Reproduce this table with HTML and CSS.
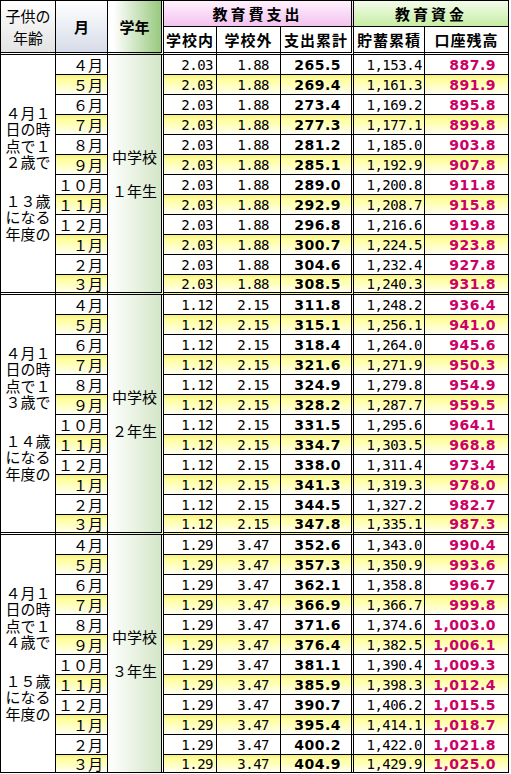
FILE: index.html
```html
<!DOCTYPE html>
<html lang="ja">
<head>
<meta charset="utf-8">
<title>教育資金</title>
<link rel="stylesheet" href="styles.css">
</head>
<body>
<table class="sheet">
<colgroup>
<col class="w1"><col class="w2"><col class="w3"><col class="w4"><col class="w5"><col class="w6"><col class="w7"><col class="w8">
</colgroup>
<thead>
<tr class="hr1">
<th rowspan="2" class="h-age">子供の<br>年齢</th>
<th rowspan="2" class="h-month">月</th>
<th rowspan="2" class="h-grade dbl-r">学年</th>
<th colspan="3" class="h-exp dbl-r">教育費支出</th>
<th colspan="2" class="h-fund">教育資金</th>
</tr>
<tr class="hr2">
<th class="sub">学校内</th>
<th class="sub">学校外</th>
<th class="sub dbl-r">支出累計</th>
<th class="sub">貯蓄累積</th>
<th class="sub">口座残高</th>
</tr>
</thead>
<tbody>
<tr class="r"><td rowspan="12" class="age end"><span class="blk">４月１<br>日の時<br>点で１<br>２歳で</span><span class="blk gap">１３歳<br>になる<br>年度の</span></td><td class="m">４月</td><td rowspan="12" class="grade end dbl-r">中学校<br><br>１年生</td><td class="a">2.03</td><td class="b">1.88</td><td class="c dbl-r">265.5</td><td class="d">1,153.4</td><td class="e">887.9</td></tr>
<tr class="r y"><td class="m">５月</td><td class="a">2.03</td><td class="b">1.88</td><td class="c dbl-r">269.4</td><td class="d">1,161.3</td><td class="e">891.9</td></tr>
<tr class="r"><td class="m">６月</td><td class="a">2.03</td><td class="b">1.88</td><td class="c dbl-r">273.4</td><td class="d">1,169.2</td><td class="e">895.8</td></tr>
<tr class="r y"><td class="m">７月</td><td class="a">2.03</td><td class="b">1.88</td><td class="c dbl-r">277.3</td><td class="d">1,177.1</td><td class="e">899.8</td></tr>
<tr class="r"><td class="m">８月</td><td class="a">2.03</td><td class="b">1.88</td><td class="c dbl-r">281.2</td><td class="d">1,185.0</td><td class="e">903.8</td></tr>
<tr class="r y"><td class="m">９月</td><td class="a">2.03</td><td class="b">1.88</td><td class="c dbl-r">285.1</td><td class="d">1,192.9</td><td class="e">907.8</td></tr>
<tr class="r"><td class="m">１０月</td><td class="a">2.03</td><td class="b">1.88</td><td class="c dbl-r">289.0</td><td class="d">1,200.8</td><td class="e">911.8</td></tr>
<tr class="r y"><td class="m">１１月</td><td class="a">2.03</td><td class="b">1.88</td><td class="c dbl-r">292.9</td><td class="d">1,208.7</td><td class="e">915.8</td></tr>
<tr class="r"><td class="m">１２月</td><td class="a">2.03</td><td class="b">1.88</td><td class="c dbl-r">296.8</td><td class="d">1,216.6</td><td class="e">919.8</td></tr>
<tr class="r y"><td class="m">１月</td><td class="a">2.03</td><td class="b">1.88</td><td class="c dbl-r">300.7</td><td class="d">1,224.5</td><td class="e">923.8</td></tr>
<tr class="r"><td class="m">２月</td><td class="a">2.03</td><td class="b">1.88</td><td class="c dbl-r">304.6</td><td class="d">1,232.4</td><td class="e">927.8</td></tr>
<tr class="r y end"><td class="m">３月</td><td class="a">2.03</td><td class="b">1.88</td><td class="c dbl-r">308.5</td><td class="d">1,240.3</td><td class="e">931.8</td></tr>

<tr class="r"><td rowspan="12" class="age end"><span class="blk">４月１<br>日の時<br>点で１<br>３歳で</span><span class="blk gap">１４歳<br>になる<br>年度の</span></td><td class="m">４月</td><td rowspan="12" class="grade end dbl-r">中学校<br><br>２年生</td><td class="a">1.12</td><td class="b">2.15</td><td class="c dbl-r">311.8</td><td class="d">1,248.2</td><td class="e">936.4</td></tr>
<tr class="r y"><td class="m">５月</td><td class="a">1.12</td><td class="b">2.15</td><td class="c dbl-r">315.1</td><td class="d">1,256.1</td><td class="e">941.0</td></tr>
<tr class="r"><td class="m">６月</td><td class="a">1.12</td><td class="b">2.15</td><td class="c dbl-r">318.4</td><td class="d">1,264.0</td><td class="e">945.6</td></tr>
<tr class="r y"><td class="m">７月</td><td class="a">1.12</td><td class="b">2.15</td><td class="c dbl-r">321.6</td><td class="d">1,271.9</td><td class="e">950.3</td></tr>
<tr class="r"><td class="m">８月</td><td class="a">1.12</td><td class="b">2.15</td><td class="c dbl-r">324.9</td><td class="d">1,279.8</td><td class="e">954.9</td></tr>
<tr class="r y"><td class="m">９月</td><td class="a">1.12</td><td class="b">2.15</td><td class="c dbl-r">328.2</td><td class="d">1,287.7</td><td class="e">959.5</td></tr>
<tr class="r"><td class="m">１０月</td><td class="a">1.12</td><td class="b">2.15</td><td class="c dbl-r">331.5</td><td class="d">1,295.6</td><td class="e">964.1</td></tr>
<tr class="r y"><td class="m">１１月</td><td class="a">1.12</td><td class="b">2.15</td><td class="c dbl-r">334.7</td><td class="d">1,303.5</td><td class="e">968.8</td></tr>
<tr class="r"><td class="m">１２月</td><td class="a">1.12</td><td class="b">2.15</td><td class="c dbl-r">338.0</td><td class="d">1,311.4</td><td class="e">973.4</td></tr>
<tr class="r y"><td class="m">１月</td><td class="a">1.12</td><td class="b">2.15</td><td class="c dbl-r">341.3</td><td class="d">1,319.3</td><td class="e">978.0</td></tr>
<tr class="r"><td class="m">２月</td><td class="a">1.12</td><td class="b">2.15</td><td class="c dbl-r">344.5</td><td class="d">1,327.2</td><td class="e">982.7</td></tr>
<tr class="r y end"><td class="m">３月</td><td class="a">1.12</td><td class="b">2.15</td><td class="c dbl-r">347.8</td><td class="d">1,335.1</td><td class="e">987.3</td></tr>

<tr class="r"><td rowspan="12" class="age"><span class="blk">４月１<br>日の時<br>点で１<br>４歳で</span><span class="blk gap">１５歳<br>になる<br>年度の</span></td><td class="m">４月</td><td rowspan="12" class="grade dbl-r">中学校<br><br>３年生</td><td class="a">1.29</td><td class="b">3.47</td><td class="c dbl-r">352.6</td><td class="d">1,343.0</td><td class="e">990.4</td></tr>
<tr class="r y"><td class="m">５月</td><td class="a">1.29</td><td class="b">3.47</td><td class="c dbl-r">357.3</td><td class="d">1,350.9</td><td class="e">993.6</td></tr>
<tr class="r"><td class="m">６月</td><td class="a">1.29</td><td class="b">3.47</td><td class="c dbl-r">362.1</td><td class="d">1,358.8</td><td class="e">996.7</td></tr>
<tr class="r y"><td class="m">７月</td><td class="a">1.29</td><td class="b">3.47</td><td class="c dbl-r">366.9</td><td class="d">1,366.7</td><td class="e">999.8</td></tr>
<tr class="r"><td class="m">８月</td><td class="a">1.29</td><td class="b">3.47</td><td class="c dbl-r">371.6</td><td class="d">1,374.6</td><td class="e">1,003.0</td></tr>
<tr class="r y"><td class="m">９月</td><td class="a">1.29</td><td class="b">3.47</td><td class="c dbl-r">376.4</td><td class="d">1,382.5</td><td class="e">1,006.1</td></tr>
<tr class="r"><td class="m">１０月</td><td class="a">1.29</td><td class="b">3.47</td><td class="c dbl-r">381.1</td><td class="d">1,390.4</td><td class="e">1,009.3</td></tr>
<tr class="r y"><td class="m">１１月</td><td class="a">1.29</td><td class="b">3.47</td><td class="c dbl-r">385.9</td><td class="d">1,398.3</td><td class="e">1,012.4</td></tr>
<tr class="r"><td class="m">１２月</td><td class="a">1.29</td><td class="b">3.47</td><td class="c dbl-r">390.7</td><td class="d">1,406.2</td><td class="e">1,015.5</td></tr>
<tr class="r y"><td class="m">１月</td><td class="a">1.29</td><td class="b">3.47</td><td class="c dbl-r">395.4</td><td class="d">1,414.1</td><td class="e">1,018.7</td></tr>
<tr class="r"><td class="m">２月</td><td class="a">1.29</td><td class="b">3.47</td><td class="c dbl-r">400.2</td><td class="d">1,422.0</td><td class="e">1,021.8</td></tr>
<tr class="r y last"><td class="m">３月</td><td class="a">1.29</td><td class="b">3.47</td><td class="c dbl-r">404.9</td><td class="d">1,429.9</td><td class="e">1,025.0</td></tr>
</tbody>
</table>
</body>
</html>
```

FILE: styles.css
```css
html, body {
  margin: 0;
  padding: 0;
  background: #ffffff;
}

.sheet {
  border-collapse: separate;
  border-spacing: 0;
  table-layout: fixed;
  width: 509px;
  border-top: 1px solid #000;
  border-left: 1px solid #000;
  font-family: "Noto Sans CJK JP", sans-serif;
  color: #000;
}

.w1 { width: 55px; }
.w2 { width: 52px; }
.w3 { width: 56px; }
.w4 { width: 53px; }
.w5 { width: 64px; }
.w6 { width: 73px; }
.w7 { width: 71px; }
.w8 { width: 84px; }

.sheet th,
.sheet td {
  box-sizing: border-box;
  padding: 0;
  border-right: 1px solid #000;
  border-bottom: 1px solid #000;
  font-size: 15px;
  line-height: 16px;
  white-space: nowrap;
  vertical-align: middle;
}

.sheet th.dbl-r,
.sheet td.dbl-r {
  border-right: 3px double #000;
}

/* header */
.hr1 { height: 26px; }
.hr2 { height: 28px; }

.hr1 th[rowspan],
.hr2 th {
  border-bottom: 3px double #000;
}

.sheet th.h-age {
  font-weight: normal;
  line-height: 22px;
  background: linear-gradient(#ffffff, #e3e3e3);
}
.h-month {
  font-weight: bold;
  background: linear-gradient(#ffffff, #d6dce8);
}
.h-grade {
  font-weight: bold;
  background: linear-gradient(to right, #ffffff 10%, #98c97d);
}
.h-exp {
  font-weight: bold;
  letter-spacing: 3px;
  background: linear-gradient(#fff2fe, #f2c2ef);
}
.h-fund {
  font-weight: bold;
  letter-spacing: 3px;
  background: linear-gradient(#f3fcea, #c6eda3);
}
.sub {
  font-weight: bold;
  letter-spacing: 1px;
  background: #ffffff;
}

/* body rows */
.r { height: 20px; }
.r.last { height: 18px; }

.r.end td { border-bottom: 3px double #000; }
.sheet td.age.end,
.sheet td.grade.end { border-bottom: 3px double #000; }

.y td {
  background: linear-gradient(#f4ec8a 0%, #ffff9a 22%, #ffffd0 70%, #fffff4 100%);
}

.age {
  text-align: center;
  background: #ffffff;
}
.blk {
  display: block;
  font-size: 15px;
  line-height: 16.5px;
}
.blk.gap { margin-top: 22px; }

.grade {
  text-align: center;
  background: linear-gradient(to right, #ffffff, #d3e6c7);
}
.sheet td.grade { line-height: 17px; }

.sheet td.m {
  text-align: right;
  padding-right: 4px;
}

.sheet td.a,
.sheet td.b,
.sheet td.d {
  text-align: right;
  font-family: "DejaVu Sans Mono", monospace;
  font-size: 14px;
  letter-spacing: -0.5px;
}
.sheet td.a { padding-right: 3px; }
.sheet td.b { padding-right: 11px; }
.sheet td.d { padding-right: 2px; }

.sheet td.c,
.sheet td.e {
  text-align: right;
  font-family: "DejaVu Sans", sans-serif;
  font-weight: bold;
  font-size: 14px;
  letter-spacing: 0.5px;
}
.sheet td.c { padding-right: 10px; }
.sheet td.e { padding-right: 12px; color: #cc0066; }
```
